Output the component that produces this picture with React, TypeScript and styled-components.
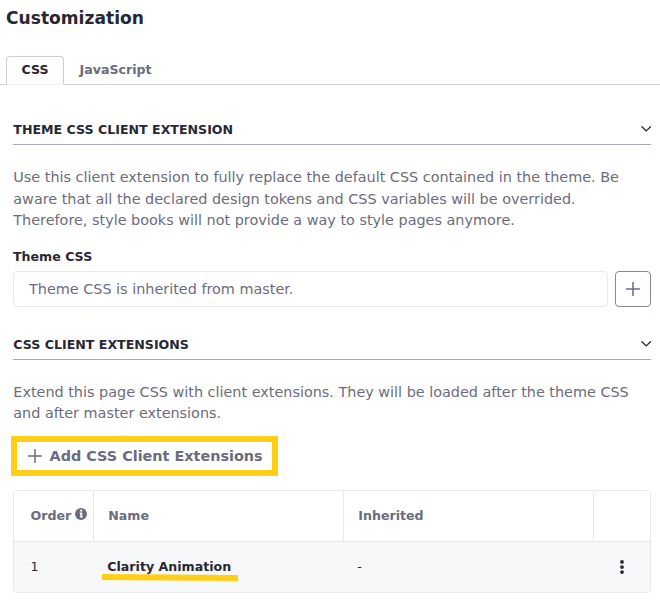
import React from 'react';
import styled, { createGlobalStyle } from 'styled-components';

const GlobalStyle = createGlobalStyle`
  * { box-sizing: border-box; }
  body {
    margin: 0;
    background: #fff;
    color: #272833;
    font-family: "DejaVu Sans", sans-serif;
    font-size: 14.4px;
  }
`;

const Page = styled.main`
  width: 660px;
  height: 602px;
  overflow: hidden;
`;

const Title = styled.h1`
  margin: 0;
  height: 56px;
  padding: 6px 6px 0;
  font-size: 17.1px;
  line-height: 24px;
  font-weight: 700;
`;

const TabBar = styled.nav`
  display: flex;
  height: 29px;
  padding-left: 6px;
  border-bottom: 1px solid #cdced9;
`;

const Tab = styled.button<{ $active?: boolean }>`
  height: 29px;
  padding: 0 14.5px 1px;
  border: 1px solid;
  border-color: ${(p) => (p.$active ? '#cdced9 #cdced9 #f3f3f7' : 'transparent')};
  border-radius: 4px 4px 0 0;
  background: ${(p) => (p.$active ? '#fff' : 'transparent')};
  color: ${(p) => (p.$active ? '#272833' : '#6b6c7e')};
  font: 700 12.6px/26px "DejaVu Sans", sans-serif;
`;

const Content = styled.div`
  padding: 30px 9px 0 13px;
`;

const SectionHeader = styled.header`
  display: flex;
  align-items: center;
  justify-content: space-between;
  height: 30px;
  border-bottom: 1px solid #a7a9bc;
`;

const SectionTitle = styled.h2`
  margin: 0;
  padding-left: 0.3px;
  font-size: 12.6px;
  line-height: 20px;
  text-transform: uppercase;
`;

const Chevron = styled.svg`
  width: 10px;
  height: 6px;
  margin-bottom: 1px;
`;

const Description = styled.p<{ $top: number }>`
  margin: ${(p) => p.$top}px 0 0;
  padding-left: 0.3px;
  color: #6b6c7e;
  line-height: 21.6px;
  white-space: nowrap;
`;

const Label = styled.label`
  display: block;
  margin-top: 15.3px;
  height: 24px;
  font-size: 12.6px;
  line-height: 20px;
  font-weight: 700;
`;

const InputRow = styled.div`
  display: flex;
  gap: 7px;
  height: 36px;
  margin-bottom: 23px;
`;

const Input = styled.input`
  flex: 1;
  min-width: 0;
  padding: 0 15px;
  border: 1px solid #e7e7ed;
  border-radius: 4px;
  color: #6b6c7e;
  font: 14.4px "DejaVu Sans", sans-serif;
`;

const IconButton = styled.button`
  display: flex;
  align-items: center;
  justify-content: center;
  width: 36px;
  padding: 0;
  border: 1px solid #858699;
  border-radius: 4px;
  background: #fff;
`;

const PlusSvg = styled.svg`
  flex: none;
  width: 14px;
  height: 14px;
`;

const AddButton = styled.button`
  display: flex;
  align-items: center;
  gap: 7.5px;
  width: 267px;
  height: 40px;
  margin: 11.2px 0 14px -2px;
  padding: 0 0 0 11px;
  border: 6px solid #ffce15;
  background: #fff;
  color: #6b6c7e;
  font: 700 14.4px "DejaVu Sans", sans-serif;
  white-space: nowrap;
`;

const Table = styled.div`
  height: 103px;
  border: 1px solid #e7e7ed;
  border-radius: 4px;
  overflow: hidden;
`;

const Row = styled.div<{ $head?: boolean }>`
  display: grid;
  grid-template-columns: 79px 250px 250px 1fr;
  height: ${(p) => (p.$head ? 51 : 50)}px;
  background: ${(p) => (p.$head ? '#fff' : '#f7f8f9')};
  border-bottom: ${(p) => (p.$head ? '1px solid #e7e7ed' : '0')};
`;

const HeadCell = styled.div`
  display: flex;
  align-items: center;
  gap: 4px;
  padding: 0 0 1px 14.3px;
  color: #6b6c7e;
  font-size: 12.6px;
  font-weight: 700;
  border-left: 1px solid #e7e7ed;
  &:first-child { padding-left: 16.5px; border-left: 0; }
`;

const Cell = styled.div`
  display: flex;
  align-items: center;
  padding: 0 0 2px 14.3px;
  font-size: 12.6px;
  &:first-child { padding-left: 16.4px; }
`;

const Name = styled.strong`
  position: relative;
`;

const Marker = styled.svg`
  position: absolute;
  left: -6px;
  top: 14px;
  width: 138px;
  height: 9px;
`;

const InfoSvg = styled.svg`
  flex: none;
  width: 12px;
  height: 12px;
  margin-bottom: 3px;
`;

const Dots = styled.svg`
  width: 4px;
  height: 14px;
  margin: 1px 0 0 13px;
`;

const Plus = () => (
  <PlusSvg viewBox="0 0 14 14">
    <path d="M7 .5v13M.5 7h13" stroke="#6b6c7e" strokeWidth="1.5" strokeLinecap="round" />
  </PlusSvg>
);

const Section = ({ title }: { title: string }) => (
  <SectionHeader>
    <SectionTitle>{title}</SectionTitle>
    <Chevron viewBox="0 0 10 6">
      <path d="M.9.8 5.2 4.9 9.5.8" fill="none" stroke="#272833" strokeWidth="1.3" strokeLinecap="round" />
    </Chevron>
  </SectionHeader>
);

export default function App() {
  return (
    <>
      <GlobalStyle />
      <Page>
        <Title>Customization</Title>
        <TabBar>
          <Tab $active>CSS</Tab>
          <Tab>JavaScript</Tab>
        </TabBar>
        <Content>
          <Section title="Theme CSS Client Extension" />
          <Description $top={22}>
            Use this client extension to fully replace the default CSS contained in the theme. Be
            <br />
            aware that all the declared design tokens and CSS variables will be overrided.
            <br />
            Therefore, style books will not provide a way to style pages anymore.
          </Description>
          <Label htmlFor="theme-css">Theme CSS</Label>
          <InputRow>
            <Input id="theme-css" readOnly value="Theme CSS is inherited from master." />
            <IconButton aria-label="Select theme CSS"><Plus /></IconButton>
          </InputRow>
          <Section title="CSS Client Extensions" />
          <Description $top={21.6}>
            Extend this page CSS with client extensions. They will be loaded after the theme CSS
            <br />
            and after master extensions.
          </Description>
          <AddButton><Plus />Add CSS Client Extensions</AddButton>
          <Table>
            <Row $head>
              <HeadCell>
                Order
                <InfoSvg viewBox="0 0 12 12">
                  <circle cx="6" cy="6" r="6" fill="#6b6c7e" />
                  <circle cx="6.2" cy="2.7" r="1.1" fill="#fff" />
                  <path d="M4.7 4.6h2.5v4.1h.8v.9H4.9v-.9h.4V5.5h-.6z" fill="#fff" />
                </InfoSvg>
              </HeadCell>
              <HeadCell>Name</HeadCell>
              <HeadCell>Inherited</HeadCell>
              <HeadCell />
            </Row>
            <Row>
              <Cell>1</Cell>
              <Cell>
                <Name>
                  Clarity Animation
                  <Marker viewBox="0 0 138 9">
                    <path d="M1 1 137 2V8L1 7Z" fill="#ffce15" />
                  </Marker>
                </Name>
              </Cell>
              <Cell>-</Cell>
              <Cell>
                <Dots viewBox="0 0 4 14">
                  <circle cx="2" cy="1.9" r="1.9" fill="#272833" />
                  <circle cx="2" cy="7.1" r="1.9" fill="#272833" />
                  <circle cx="2" cy="12.1" r="1.9" fill="#272833" />
                </Dots>
              </Cell>
            </Row>
          </Table>
        </Content>
      </Page>
    </>
  );
}
